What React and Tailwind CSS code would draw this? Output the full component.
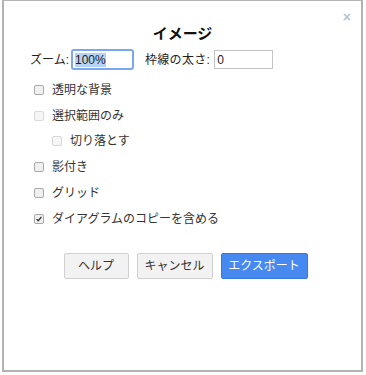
import React from 'react';

const font = { fontFamily: '"Liberation Sans", "Noto Sans CJK JP", sans-serif' };

function Check({ label, checked, disabled, indent }) {
  return (
    <div className={`flex items-center h-[25.8px] ${indent ? 'pl-[18px]' : ''}`}>
      <span
        className={`w-[10px] h-[10px] rounded-[2px] border flex items-center justify-center mr-[8px] ${
          disabled ? 'border-[#d8d8d8] bg-[#f6f6f6]' : 'border-[#a9a9a9] bg-[#f0f0f0]'
        }`}
      >
        {checked && (
          <svg viewBox="0 0 10 10" className="w-[8px] h-[8px]">
            <path d="M2 5.2 L4 7.2 L8 2.5" fill="none" stroke="#333" strokeWidth="1.6" />
          </svg>
        )}
      </span>
      <span className="text-[12px] text-[#333]">{label}</span>
    </div>
  );
}

export default function App() {
  return (
    <div className="w-[366px] h-[375px] bg-white relative overflow-hidden" style={font}>
      {/* dialog */}
      <div className="ml-[2px] w-[361px] h-[372px] bg-white border-l-2 border-r-2 border-b-2 border-t border-[#b3b3b3] relative">
        <span className="absolute right-[10px] top-[6px] text-[14px] text-[#b8c4d6] font-bold">×</span>

        <div className="text-center font-bold text-[15px] text-[#111] pt-[23px] leading-[20px]">イメージ</div>

        <div className="flex items-center mt-[5px] pl-[26px] text-[12px] text-[#222]">
          <span>ズーム:</span>
          <div className="ml-[2px] w-[63px] h-[21px] border-2 border-[#7aa7ef] rounded-[3px] flex items-center px-[2px]">
            <span className="bg-[#b4d3f7] leading-[14px] text-[12px]">100%</span>
          </div>
          <span className="ml-[11px] tracking-[0.3px]">枠線の太さ:</span>
          <div className="ml-[4px] w-[59px] h-[19px] border border-[#c4c4c4] flex items-center px-[2px]">0</div>
        </div>

        <div className="pl-[30px] mt-[7px]">
          <Check label="透明な背景" />
          <Check label="選択範囲のみ" disabled />
          <Check label="切り落とす" disabled indent />
          <Check label="影付き" />
          <Check label="グリッド" />
          <Check label="ダイアグラムのコピーを含める" checked />
        </div>

        <div className="flex justify-center gap-[8px] mt-[21px] pl-[6px] text-[12px]">
          <button className="w-[65px] h-[26px] bg-[#f2f2f2] border border-[#d0d0d0] rounded-[2px] text-[#333]">ヘルプ</button>
          <button className="w-[76px] h-[26px] bg-[#f2f2f2] border border-[#d0d0d0] rounded-[2px] text-[#333]">キャンセル</button>
          <button className="w-[87px] h-[26px] bg-[#4689f0] border border-[#3a78de] rounded-[2px] text-white">エクスポート</button>
        </div>
      </div>
    </div>
  );
}
